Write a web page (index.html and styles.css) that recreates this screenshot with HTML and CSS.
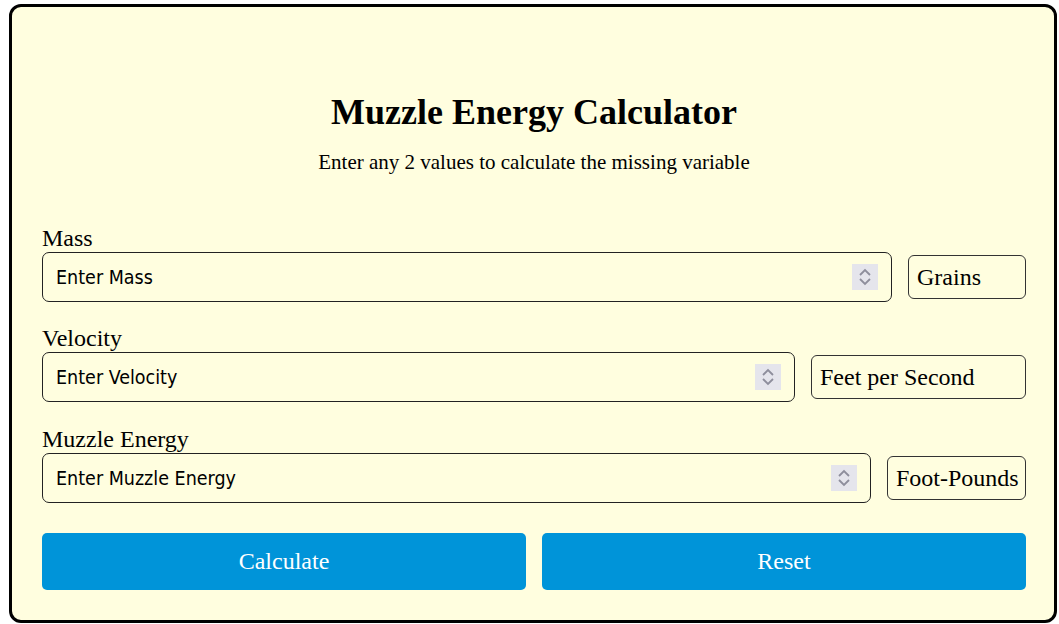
FILE: index.html
```html
<!DOCTYPE html>
<html lang="en">
    <head>
        <title>Muzzle Energy Calculator</title>

        <meta charset="utf-8">

        <link rel="stylesheet" href="styles.css">
    </head>

    <body>
        <div class="calc">
            <h1 class="title">Muzzle Energy Calculator</h1>
            <p class="intro">Enter any 2 values to calculate the missing variable</p>

            <div class="field">
                <label class="label" for="mass">Mass</label>
                <div class="row">
                    <div class="box">
                        <input class="value" id="mass" type="text" placeholder="Enter Mass">
                        <span class="spin"><svg width="26" height="26" viewBox="0 0 26 26"><path d="M8 11 L13 6 L18 11 M8 15 L13 20 L18 15" fill="none" stroke="#8e8e9c" stroke-width="1.8"/></svg></span>
                    </div>
                    <div class="unit unit-mass">Grains</div>
                </div>
            </div>

            <div class="field">
                <label class="label" for="velocity">Velocity</label>
                <div class="row">
                    <div class="box">
                        <input class="value" id="velocity" type="text" placeholder="Enter Velocity">
                        <span class="spin"><svg width="26" height="26" viewBox="0 0 26 26"><path d="M8 11 L13 6 L18 11 M8 15 L13 20 L18 15" fill="none" stroke="#8e8e9c" stroke-width="1.8"/></svg></span>
                    </div>
                    <div class="unit unit-velocity">Feet per Second</div>
                </div>
            </div>

            <div class="field field-last">
                <label class="label" for="energy">Muzzle Energy</label>
                <div class="row">
                    <div class="box">
                        <input class="value" id="energy" type="text" placeholder="Enter Muzzle Energy">
                        <span class="spin"><svg width="26" height="26" viewBox="0 0 26 26"><path d="M8 11 L13 6 L18 11 M8 15 L13 20 L18 15" fill="none" stroke="#8e8e9c" stroke-width="1.8"/></svg></span>
                    </div>
                    <div class="unit unit-energy">Foot-Pounds</div>
                </div>
            </div>

            <div class="buttons">
                <button class="button">Calculate</button>
                <button class="button">Reset</button>
            </div>
        </div>
    </body>
</html>
```

FILE: styles.css
```css
body {
    margin: 0;
    font-family: "Liberation Serif", "Times New Roman", serif;
}
.calc {
    margin: 4px 2px 0 9px;
    padding: 58px 28px 30px 30px;
    background: #fffedf;
    border: 3px solid #000;
    border-radius: 12px;
}
.title {
    margin: 29px 0 0;
    font-size: 36px;
    line-height: 37px;
    text-align: center;
}
.intro {
    margin: 21px 0 0;
    font-size: 21px;
    line-height: 21px;
    text-align: center;
}
.field {
    margin-top: 25px;
}
.field:first-of-type {
    margin-top: 54px;
}
.field-last {
    margin-top: 26px;
}
.label {
    display: block;
    font-size: 24px;
    line-height: 23px;
    margin-bottom: 2px;
}
.row {
    display: flex;
    align-items: center;
    gap: 16px;
}
.box {
    flex: 1;
    display: flex;
    align-items: center;
    height: 48px;
    border: 1px solid #222;
    border-radius: 7px;
    padding: 0 13px 0 13px;
}
.value {
    flex: 1;
    min-width: 0;
    border: none;
    outline: none;
    background: transparent;
    font: 19.5px "DejaVu Sans Condensed", Tahoma, sans-serif;
    color: #000;
    padding: 0;
}
.value::placeholder {
    color: #000;
}
.spin {
    display: flex;
    width: 26px;
    height: 26px;
    background: #e5e5ec;
}
.unit {
    box-sizing: border-box;
    height: 44px;
    padding: 0 8px;
    border: 1px solid #333;
    border-radius: 6px;
    font-size: 24px;
    line-height: 42px;
    white-space: nowrap;
}
.unit-mass {
    width: 118px;
}
.unit-velocity {
    width: 215px;
}
.unit-energy {
    width: 139px;
}
.buttons {
    display: flex;
    gap: 16px;
    margin-top: 30px;
}
.button {
    flex: 1;
    height: 57px;
    border: none;
    border-radius: 5px;
    background: #0094d9;
    color: #fff;
    font: 24px "Liberation Serif", "Times New Roman", serif;
    cursor: pointer;
}
```
